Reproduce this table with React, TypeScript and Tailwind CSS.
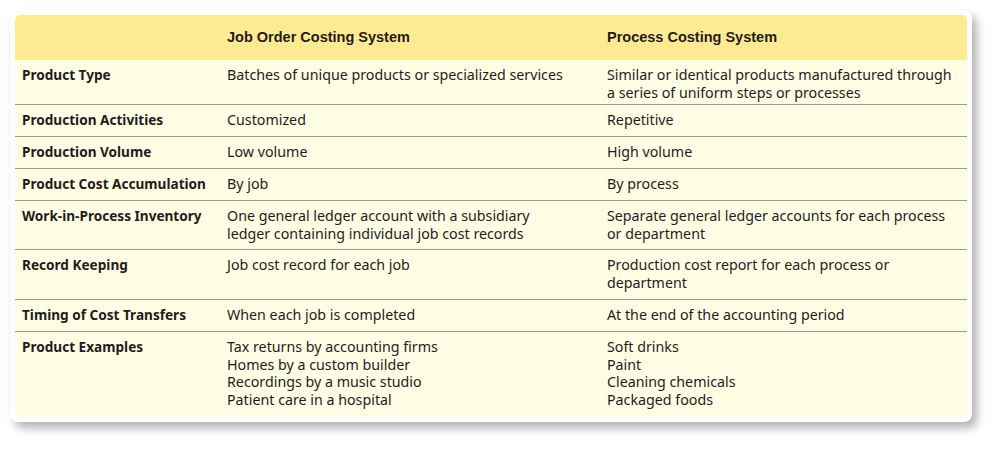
const rows: { label: string; job: string[]; process: string[]; h: string }[] = [
  {
    label: 'Product Type',
    job: ['Batches of unique products or specialized services'],
    process: ['Similar or identical products manufactured through', 'a series of uniform steps or processes'],
    h: 'h-[45px]',
  },
  { label: 'Production Activities', job: ['Customized'], process: ['Repetitive'], h: 'h-[32px]' },
  { label: 'Production Volume', job: ['Low volume'], process: ['High volume'], h: 'h-[32px]' },
  { label: 'Product Cost Accumulation', job: ['By job'], process: ['By process'], h: 'h-[32px]' },
  {
    label: 'Work-in-Process Inventory',
    job: ['One general ledger account with a subsidiary', 'ledger containing individual job cost records'],
    process: ['Separate general ledger accounts for each process', 'or department'],
    h: 'h-[49px]',
  },
  {
    label: 'Record Keeping',
    job: ['Job cost record for each job'],
    process: ['Production cost report for each process or', 'department'],
    h: 'h-[50px]',
  },
  {
    label: 'Timing of Cost Transfers',
    job: ['When each job is completed'],
    process: ['At the end of the accounting period'],
    h: 'h-[32px]',
  },
  {
    label: 'Product Examples',
    job: ['Tax returns by accounting firms', 'Homes by a custom builder', 'Recordings by a music studio', 'Patient care in a hospital'],
    process: ['Soft drinks', 'Paint', 'Cleaning chemicals', 'Packaged foods'],
    h: 'h-[85px]',
  },
]

function Lines({ lines }: { lines: string[] }) {
  return (
    <div>
      {lines.map((l) => (
        <div key={l}>{l}</div>
      ))}
    </div>
  )
}

export default function App() {
  return (
    <div className="w-[1000px] h-[451px] bg-white pl-[10px] pt-[10px]">
      <div className="w-[962px] rounded-[8px] bg-white p-[5px] shadow-[5px_6px_10px_rgba(0,0,0,0.3)]">
        <div
          className="rounded-[5px] overflow-hidden bg-[#fffde3] text-[#1f1c1d] text-[14.25px] leading-[17.5px]"
          style={{ fontFamily: '"Noto Sans", sans-serif' }}
        >
          {/* Header */}
          <div className="h-[45px] pt-[1px] bg-[#feeb91] flex items-center font-bold text-[14.5px] font-['Liberation_Sans',sans-serif]">
            <div className="w-[212px] pl-[7px]" />
            <div className="w-[380px]">Job Order Costing System</div>
            <div>Process Costing System</div>
          </div>

          {rows.map((r, i) => (
            <div
              key={r.label}
              className={`flex pt-[6px] ${r.h} ${i < rows.length - 1 ? 'border-b-[1.5px] border-[#9a9a9a]' : ''}`}
            >
              <div className="w-[212px] pl-[7px] font-bold text-[13.6px]">{r.label}</div>
              <div className="w-[380px]">
                <Lines lines={r.job} />
              </div>
              <div>
                <Lines lines={r.process} />
              </div>
            </div>
          ))}
        </div>
      </div>
    </div>
  )
}
